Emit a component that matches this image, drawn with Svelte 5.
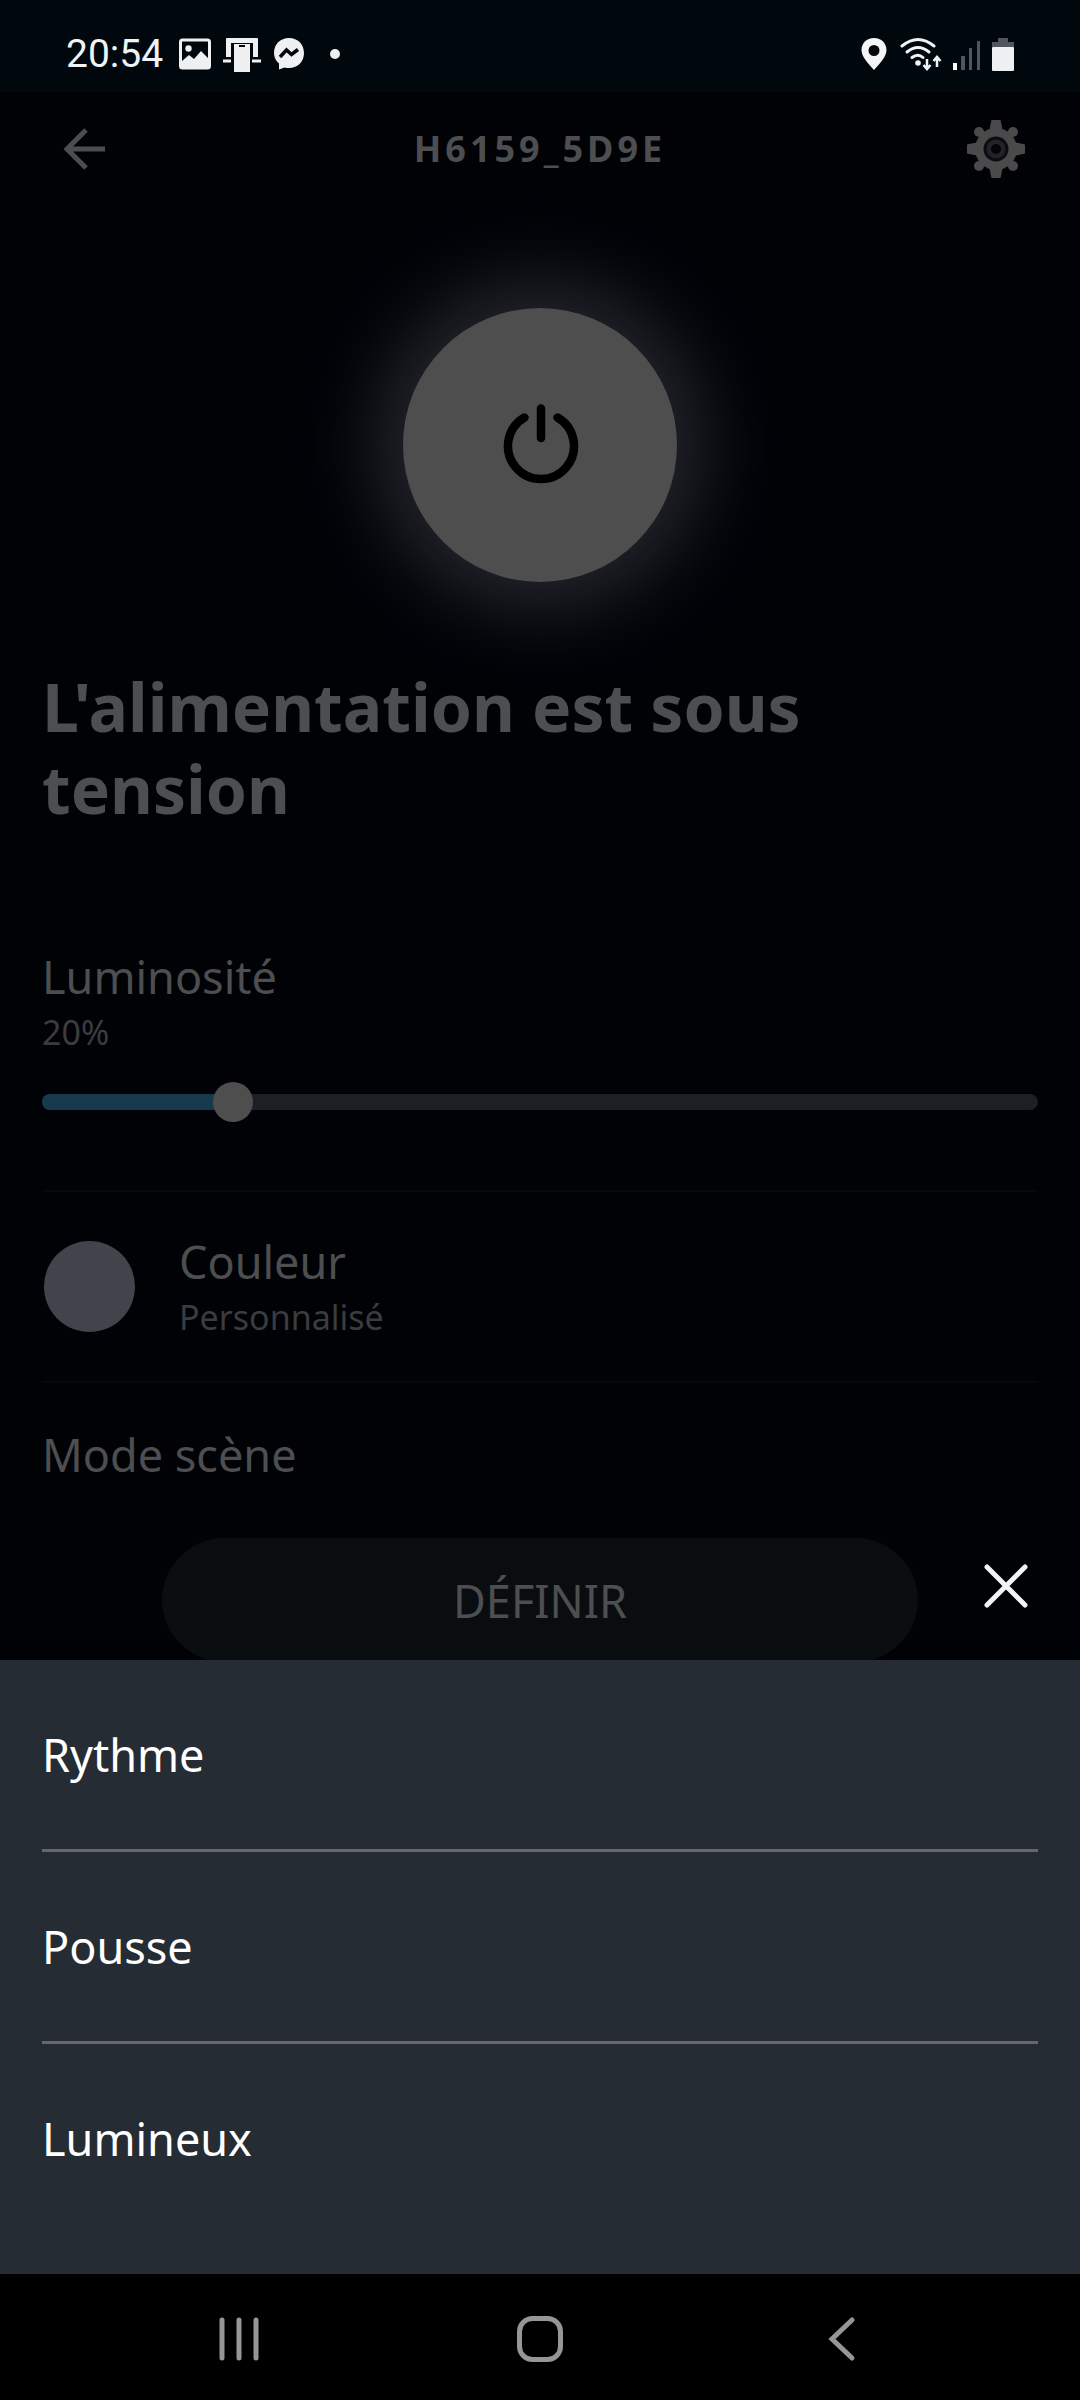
<script>
    let brightness = $state(20);
    let sheetOpen = $state(true);

    const scenes = ['Rythme', 'Pousse', 'Lumineux'];
    const teeth = [0, 90, 180, 270];
</script>

<svelte:head>
    <title>H6159_5D9E</title>
</svelte:head>

<div class="phone">
    <div class="status">
        <span class="time">20:54</span>
        <svg width="32" height="32" viewBox="0 0 32 32">
            <rect x="1.500" y="2" width="29" height="28" rx="2" fill="none" stroke="#eef0f2" stroke-width="3" />
            <circle cx="9.500" cy="10.500" r="3.200" fill="#eef0f2" />
            <path d="M3 23 L10 17 L15 21 L22 13 L29 20 V29 H3 Z" fill="#eef0f2" />
        </svg>
        <svg width="38" height="36" viewBox="0 0 38 36">
            <path d="M4 2 H34 Q35 2 35 3 V21 H30 V7 H8 V21 H3 V3 Q3 2 4 2 Z" fill="#eef0f2" />
            <path d="M0 25 H8 M29 25 H38" stroke="#eef0f2" stroke-width="3" />
            <rect x="11" y="8" width="16" height="28" fill="#eef0f2" />
            <path d="M16 10 H22" stroke="#00080e" stroke-width="2" />
        </svg>
        <svg width="32" height="34" viewBox="0 0 32 34">
            <path d="M16 1 C7 1 1 7.500 1 16 C1 20.500 3 24 6 26.500 V32.500 L11.500 30.500 C13 31 14.500 31 16 31 C25 31 31 24.500 31 16 C31 7.500 25 1 16 1 Z" fill="#eef0f2" />
            <path d="M7 20 L13.500 13 L18.500 17.500 L25 12.500" fill="none" stroke="#00080e" stroke-width="3.500" />
        </svg>
        <span class="dot"></span>
        <div class="system">
            <svg width="26" height="34" viewBox="0 0 26 34">
                <path fill-rule="evenodd" d="M13 1 C5.500 1 0.500 6.500 0.500 13 C0.500 20 7 26 13 33 C19 26 25.500 20 25.500 13 C25.500 6.500 20.500 1 13 1 Z M13 8 A5.500 5.500 0 1 1 13 19 A5.500 5.500 0 1 1 13 8 Z" fill="#f4f5f6" />
            </svg>
            <svg width="44" height="34" viewBox="-2 0 44 34">
                <g fill="none" stroke="#eef3f6" stroke-width="3" stroke-linecap="round">
                    <path d="M2 9 Q18 -4 34 9" />
                    <path d="M7 15 Q18 6 29 15" />
                    <path d="M12 20.500 Q18 16 23 20.500" />
                </g>
                <circle cx="18" cy="26" r="2.800" fill="#eef3f6" />
                <path d="M27 22 V31 M23.500 28 L27 32 L30.500 28 M37 30 V20 M33.500 24 L37 20 L40.500 24" fill="none" stroke="#eef3f6" stroke-width="2.500" />
            </svg>
            <svg width="28" height="34" viewBox="0 0 28 34">
                <rect x="0" y="26" width="4" height="7" fill="#fff" />
                <path d="M8 19 h4 v14 h-4 Z M16 11 h3 v22 h-3 Z M24 4 h3 v29 h-3 Z" fill="#50565c" />
            </svg>
            <svg width="22" height="34" viewBox="0 0 22 34">
                <path d="M6 1 h10 v4 h6 v5 H0 V5 h6 Z" fill="#50565c" />
                <rect y="10" width="22" height="24" rx="1" fill="#eef0f2" />
            </svg>
        </div>
    </div>

    <main>
        <header>
            <button class="back" aria-label="Retour">
                <svg width="44" height="44" viewBox="0 0 44 44" fill="none" stroke="#4b4d50" stroke-width="5">
                    <path d="M43 22 H5 M24 3 L5 22 L24 41" />
                </svg>
            </button>
            <h1>H6159_5D9E</h1>
            <button class="settings" aria-label="Paramètres">
                <svg width="60" height="60" viewBox="-30 -30 60 60">
                    <g fill="#4a4a4b">
                        {#each teeth as angle}
                            <path d="M-4 -29 H4 Q5 -29 5 -27 L7 -17 H-7 L-5 -27 Q-5 -29 -4 -29 Z" transform="rotate({angle})" />
                            <circle cy="-24" r="5" transform="rotate({angle + 45})" />
                        {/each}
                        <circle r="21" />
                    </g>
                    <circle r="11" fill="#232327" stroke="#0c0d10" stroke-width="3" />
                    <circle r="5" fill="#030408" />
                </svg>
            </button>
        </header>

        <button class="power" aria-label="Alimentation">
            <svg width="80" height="84" viewBox="-40 -42 80 84" fill="none" stroke="#000" stroke-width="8.500" stroke-linecap="round">
                <path d="M-15.500 -27.500 A33 33 0 1 0 17.500 -27.500 M1 -36.500 V-7" />
            </svg>
        </button>

        <h2>L'alimentation est sous tension</h2>

        <section class="brightness">
            <label class="label" for="brightness">Luminosité</label>
            <span class="value">{brightness}%</span>
            <div class="slider">
                <div class="track">
                    <div class="fill" style="width: {brightness}%"></div>
                </div>
                <input id="brightness" type="range" min="0" max="100" bind:value={brightness} />
            </div>
        </section>

        <section class="color">
            <span class="swatch"></span>
            <div>
                <span class="label">Couleur</span>
                <span class="value">Personnalisé</span>
            </div>
        </section>

        <section class="scene">
            <span class="label">Mode scène</span>
            <button onclick={() => (sheetOpen = true)}>DÉFINIR</button>
        </section>

        {#if sheetOpen}
            <div class="overlay">
                <button class="close" aria-label="Fermer" onclick={() => (sheetOpen = false)}>
                    <svg width="44" height="44" viewBox="0 0 44 44" stroke="#f2f3f4" stroke-width="5" stroke-linecap="round">
                        <path d="M3 3 L41 41 M41 3 L3 41" />
                    </svg>
                </button>
                <ul>
                    {#each scenes as scene}
                        <li><button>{scene}</button></li>
                    {/each}
                </ul>
            </div>
        {/if}
    </main>

    <nav>
        <button aria-label="Applications récentes">
            <svg width="48" height="48" viewBox="0 0 48 48" stroke="#969696" stroke-width="5" stroke-linecap="round">
                <path d="M7 5 V43 M24 5 V43 M41 5 V43" />
            </svg>
        </button>
        <button aria-label="Accueil">
            <svg width="48" height="48" viewBox="0 0 48 48" fill="none" stroke="#969696" stroke-width="5">
                <rect x="3.500" y="3.500" width="41" height="41" rx="13" />
            </svg>
        </button>
        <button aria-label="Précédent">
            <svg width="48" height="48" viewBox="0 0 48 48" fill="none" stroke="#969696" stroke-width="5" stroke-linecap="round">
                <path d="M35 5 L15 24 L35 43" />
            </svg>
        </button>
    </nav>
</div>

<style>
    :global(body) {
        margin: 0;
        background: #000;
    }

    .phone {
        display: flex;
        flex-direction: column;
        min-height: 100vh;
        font-family: 'Noto Sans', 'Open Sans', sans-serif;
        color: #4d4e50;
    }

    svg {
        display: block;
        flex: none;
    }

    button {
        display: flex;
        align-items: center;
        justify-content: center;
        padding: 0;
        border: 0;
        background: none;
        color: inherit;
        font: inherit;
        cursor: pointer;
    }

    .status {
        display: flex;
        align-items: center;
        gap: 12px;
        box-sizing: border-box;
        height: 92px;
        padding: 16px 66px 0;
        background: #00080e;
        color: #eef3f6;
    }

    .time {
        margin-right: 4px;
        font: 39px/48px Roboto, sans-serif;
    }

    .dot {
        width: 10px;
        height: 10px;
        margin-left: 13px;
        border-radius: 50%;
        background: #eef0f2;
    }

    .system {
        display: flex;
        gap: 11px;
        margin-left: auto;
    }

    main {
        position: relative;
        display: flex;
        flex: 1;
        flex-direction: column;
        overflow: hidden;
        padding: 0 42px;
        background: #000206;
    }

    header {
        display: flex;
        align-items: center;
        justify-content: space-between;
        height: 114px;
        padding: 0 12px;
    }

    header button {
        box-sizing: border-box;
        width: 68px;
    }

    .back {
        justify-content: flex-start;
        padding-left: 8px;
    }

    .settings {
        justify-content: flex-end;
    }

    h1 {
        margin: 0;
        font-size: 36px;
        line-height: 48px;
        letter-spacing: 4px;
    }

    .power {
        align-self: center;
        width: 274px;
        height: 274px;
        margin-top: 102px;
        border-radius: 50%;
        background: #4e4e4e;
        box-shadow: 0 0 88px 20px #2c2e36;
    }

    h2 {
        max-width: 900px;
        margin: 83px 0 120px;
        font-size: 66px;
        line-height: 82px;
    }

    .label,
    .value {
        display: block;
    }

    .label {
        font-size: 45px;
        line-height: 56px;
    }

    .value {
        margin-top: 5px;
        font-size: 34px;
        line-height: 44px;
        color: #3a3c3f;
    }

    .brightness {
        padding-bottom: 68px;
    }

    .slider {
        position: relative;
        display: flex;
        align-items: center;
        height: 40px;
        margin-top: 28px;
    }

    .track {
        flex: 1;
        height: 16px;
        overflow: hidden;
        border-radius: 8px;
        background: #1c1f23;
    }

    .fill {
        height: 100%;
        background: #163a4c;
    }

    /* the thumb is centred on the start of the track at 0 */
    input {
        position: absolute;
        left: -20px;
        width: 100%;
        height: 40px;
        margin: 0;
        appearance: none;
        background: none;
    }

    input::-webkit-slider-thumb {
        width: 40px;
        height: 40px;
        appearance: none;
        border-radius: 50%;
        background: #4e4e4e;
    }

    .color {
        display: flex;
        align-items: center;
        gap: 44px;
        height: 189px;
        border-top: 2px solid #06080c;
        border-bottom: 2px solid #06080c;
    }

    .swatch {
        width: 91px;
        height: 91px;
        margin-left: 2px;
        border-radius: 50%;
        background: #42444c;
    }

    .scene {
        display: flex;
        flex-direction: column;
        gap: 55px;
        padding-top: 44px;
    }

    .scene button {
        align-self: center;
        width: 76%;
        height: 124px;
        border-radius: 62px;
        background: #0a0d10;
        font-size: 45px;
    }

    .overlay {
        position: absolute;
        right: 0;
        bottom: 0;
        left: 0;
    }

    .close {
        margin: 0 52px 52px auto;
    }

    ul {
        margin: 0;
        padding: 0 42px 41px;
        background: #252c33;
        list-style: none;
    }

    li + li {
        border-top: 3px solid #66666f;
    }

    li button {
        width: 100%;
        height: 189px;
        justify-content: flex-start;
        color: #fff;
        font-size: 45px;
    }

    nav {
        display: flex;
        box-sizing: border-box;
        height: 126px;
        padding: 4px 88px 0;
        background: #000;
    }

    nav button {
        flex: 1;
    }
</style>
